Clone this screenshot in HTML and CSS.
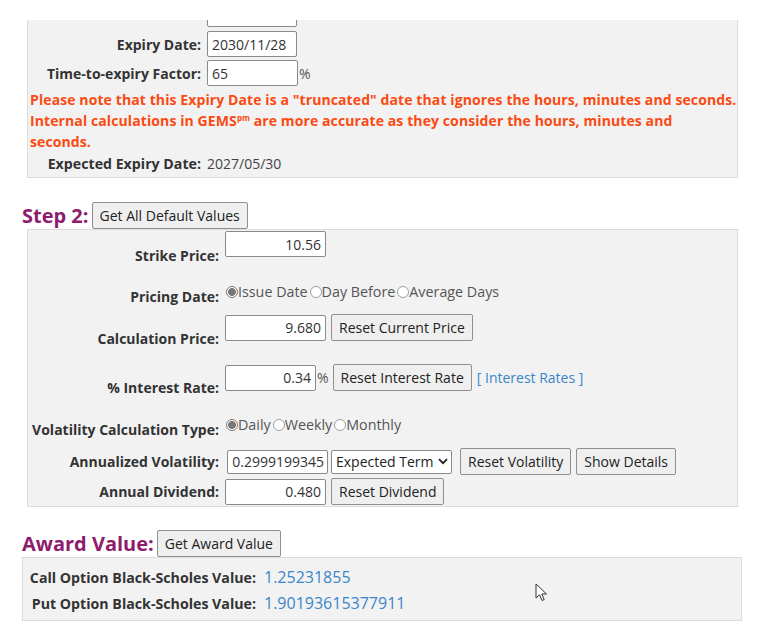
FILE: index.html
```html
<!DOCTYPE html>
<html>
<head>
<meta charset="utf-8">
<link rel="stylesheet" href="styles.css">
</head>
<body>
<div class="page">
  <div class="panel panel-top">
    <div class="trow cut"><span class="tlbl"></span><span class="inp inp-date"></span></div>
    <div class="trow"><label class="tlbl">Expiry Date:</label><span class="inp inp-date">2030/11/28</span></div>
    <div class="trow"><label class="tlbl">Time-to-expiry Factor:</label><span class="inp inp-factor">65</span><span class="unit">%</span></div>
    <p class="note">Please note that this Expiry Date is a "truncated" date that ignores the hours, minutes and seconds. Internal calculations in GEMS<sup>pm</sup> are more accurate as they consider the hours, minutes and<br>seconds.</p>
    <div class="trow"><label class="tlbl">Expected Expiry Date:</label><span class="plain">2027/05/30</span></div>
  </div>

  <div class="heading-row heading-step"><h2 class="heading">Step 2:</h2><button class="btn">Get All Default Values</button></div>
  <div class="panel panel-step">
    <div class="srow r-strike"><label class="slbl">Strike Price:</label><div class="sval"><span class="inp inp-num">10.56</span></div></div>
    <div class="srow r-pricing"><label class="slbl">Pricing Date:</label><div class="sval radios"><span class="radio on"></span>Issue Date<span class="radio"></span>Day Before<span class="radio"></span>Average Days</div></div>
    <div class="srow r-calc"><label class="slbl">Calculation Price:</label><div class="sval"><span class="inp inp-num">9.680</span><button class="btn">Reset Current Price</button></div></div>
    <div class="srow r-rate"><label class="slbl">% Interest Rate:</label><div class="sval"><span class="inp inp-rate">0.34</span><span class="unit">%</span><button class="btn">Reset Interest Rate</button><a class="link">[ Interest Rates ]</a></div></div>
    <div class="srow r-voltype"><label class="slbl">Volatility Calculation Type:</label><div class="sval radios"><span class="radio on"></span>Daily<span class="radio"></span>Weekly<span class="radio"></span>Monthly</div></div>
    <div class="srow r-vol"><label class="slbl">Annualized Volatility:</label><div class="sval"><span class="inp inp-num inp-vol">0.2999199345</span><span class="select">Expected Term<svg class="chev" width="10" height="7" viewBox="0 0 10 7"><path d="M1 1.2 L5 5.2 L9 1.2" fill="none" stroke="#222" stroke-width="1.8"/></svg></span><button class="btn btn-resetvol">Reset Volatility</button><button class="btn">Show Details</button></div></div>
    <div class="srow r-div"><label class="slbl">Annual Dividend:</label><div class="sval"><span class="inp inp-num">0.480</span><button class="btn">Reset Dividend</button></div></div>
  </div>

  <div class="heading-row heading-award"><h2 class="heading">Award Value:</h2><button class="btn">Get Award Value</button></div>
  <div class="panel panel-award">
    <div class="arow"><span class="albl">Call Option Black-Scholes Value:</span><span class="aval">1.25231855</span></div>
    <div class="arow"><span class="albl">Put Option Black-Scholes Value:</span><span class="aval">1.90193615377911</span></div>
    <svg class="cursor" width="13" height="19" viewBox="0 0 13 19"><path d="M1 1 L1 15 L4.5 11.8 L7 17.5 L9.2 16.5 L6.8 11 L11.5 11 Z" fill="#fff" stroke="#333" stroke-width="1" stroke-linejoin="round"/></svg>
  </div>
</div>
</body>
</html>
```

FILE: styles.css
```css
* { box-sizing: border-box; }
html, body { margin: 0; background: #fff; }
body {
  font-family: "Open Sans", "Noto Sans", sans-serif;
  font-size: 14px;
  color: #333;
}
.page { padding: 20px 0 20px 22px; }

.panel {
  background: #f2f2f3;
  border: 1px solid #dcdcdc;
}
.panel-top, .panel-step { margin-left: 5px; width: 711px; }
.panel-top { border-top: none; padding: 0 0 4px 1px; }

/* top panel rows */
.trow { display: flex; align-items: center; height: 26px; margin-top: 3px; }
.trow.cut { height: 8px; margin-top: 0; align-items: flex-end; overflow: hidden; }
.trow.cut .inp { margin-bottom: 1px; }
.tlbl { width: 172px; text-align: right; font-weight: 700; margin-right: 6px; line-height: 19px; color: #333; }
.trow:last-child { height: 19px; margin-top: 2px; }
.trow:last-child .tlbl { font-size: 14.2px; }
.plain { color: #444; line-height: 19px; }

.inp {
  display: inline-flex; align-items: center;
  height: 26px; flex: none;
  background: #fff;
  border: 1px solid #8a8a8a;
  border-radius: 2px;
  padding: 0 4px;
  color: #333;
  font-size: 14px;
  white-space: nowrap;
}
.inp-date { width: 90px; }
.inp-factor { width: 91px; }
.unit { color: #555; margin-left: 1px; }

.note {
  margin: 3px 0 0 1px;
  color: #fa4a12;
  font-weight: 700;
  line-height: 21px;
  letter-spacing: 0.1px;
}
.note sup { font-size: 8px; vertical-align: 5px; line-height: 0; }

/* headings */
.heading-row { display: flex; align-items: flex-end; height: 26px; }
.heading-step { margin-top: 25px; }
.heading-award { margin-top: 24px; }
.heading {
  margin: 0 3px 0 0;
  font-size: 20px;
  font-weight: 700;
  color: #8e1b6d;
  line-height: 26px;
}

.btn {
  height: 27px;
  font-family: "Open Sans", "Noto Sans", sans-serif;
  font-size: 14px;
  color: #222;
  background: #efefef;
  border: 1px solid #8f8f8f;
  border-radius: 2px;
  padding: 0 7px;
  flex: none;
}

/* step 2 panel */
.panel-step { padding: 1px 0 1px 1px; }
.srow { display: flex; }
.slbl {
  width: 190px; margin-right: 6px; flex: none;
  text-align: right; font-weight: 700; line-height: 19px; color: #333;
}
.sval { display: flex; align-items: center; white-space: nowrap; }
.inp-num { width: 101px; justify-content: flex-end; }
.inp-rate { width: 91px; justify-content: flex-end; }
.sval .btn { margin-left: 5px; }
.sval .unit + .btn { margin-left: 4px; }

.r-strike, .r-pricing, .r-calc, .r-rate, .r-voltype { align-items: flex-start; }
.r-strike .slbl, .r-pricing .slbl, .r-calc .slbl, .r-rate .slbl, .r-voltype .slbl { align-self: flex-end; }
.r-strike { height: 34px; }
.r-pricing { height: 24px; margin-top: 17px; }
.r-calc { height: 34px; margin-top: 8px; }
.r-rate { height: 33px; margin-top: 16px; }
.r-voltype { height: 24px; margin-top: 18px; }
.r-vol { align-items: center; height: 27px; margin-top: 9px; }
.r-div { align-items: center; height: 27px; margin-top: 3px; }

.radios { color: #555; line-height: 19px; font-size: 14.3px; }
.radio {
  width: 12px; height: 12px; border-radius: 50%;
  border: 1px solid #a0a0a0; background: #fff;
  display: inline-block; flex: none;
  margin: 0 0 0 2px;
}
.radios .radio:first-child { margin-left: 1px; }
.radio.on { border-color: #777; background: radial-gradient(circle, #777 0 3.6px, #fff 4.2px); }

.link { color: #3a86c8; margin-left: 5px; }

.inp-vol { margin-left: 2px; height: 24px; padding: 0 3px; }
.select {
  display: inline-flex; align-items: center; justify-content: space-between;
  width: 121px; height: 24px; margin-left: 3px;
  background: #fff; border: 1px solid #8a8a8a; border-radius: 2px;
  padding: 0 3px 0 4px; color: #222;
}
.chev { flex: none; }
.sval .btn-resetvol { margin-left: 8px; }

/* award */
.panel-award { width: 720px; padding: 6px 0 4px; position: relative; }
.arow { display: flex; align-items: center; height: 26px; }
.albl { width: 233px; text-align: right; font-weight: 700; color: #333; font-size: 14.2px; }
.aval { margin-left: 8px; color: #3a86c8; font-size: 16px; }
.cursor { position: absolute; left: 512px; top: 25px; }
```
